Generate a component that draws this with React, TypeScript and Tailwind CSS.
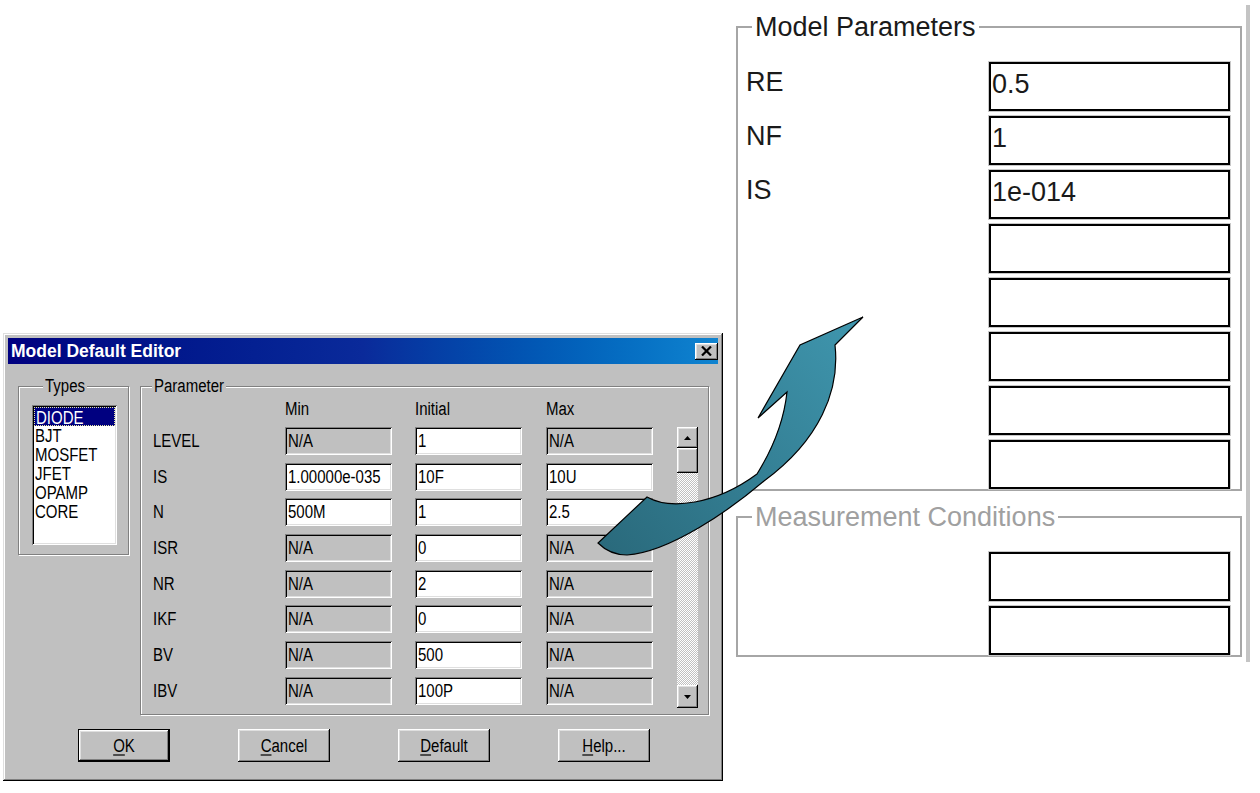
import React from 'react'

const font = "font-['Liberation_Sans',Arial,sans-serif]"
const sunken =
  'shadow-[inset_1px_1px_0_#808080,inset_-1px_-1px_0_#ffffff,inset_2px_2px_0_#000000,inset_-2px_-2px_0_#dfdfdf]'
const raised =
  'shadow-[inset_-1px_-1px_0_#000000,inset_1px_1px_0_#ffffff,inset_-2px_-2px_0_#808080,inset_2px_2px_0_#dfdfdf]'
const etched = 'border border-[#808080] shadow-[1px_1px_0_#ffffff,inset_1px_1px_0_#ffffff]'

// the screenshot is stretched a bit vertically, so dialog text is too
const T = ({ children }: { children: React.ReactNode }) => (
  <span className="inline-block scale-y-[1.2]">{children}</span>
)

type Cell = [string, boolean]

const params: [string, Cell, Cell, Cell][] = [
  ['LEVEL', ['N/A', false], ['1', true], ['N/A', false]],
  ['IS', ['1.00000e-035', true], ['10F', true], ['10U', true]],
  ['N', ['500M', true], ['1', true], ['2.5', true]],
  ['ISR', ['N/A', false], ['0', true], ['N/A', false]],
  ['NR', ['N/A', false], ['2', true], ['N/A', false]],
  ['IKF', ['N/A', false], ['0', true], ['N/A', false]],
  ['BV', ['N/A', false], ['500', true], ['N/A', false]],
  ['IBV', ['N/A', false], ['100P', true], ['N/A', false]],
]

const types = ['DIODE', 'BJT', 'MOSFET', 'JFET', 'OPAMP', 'CORE']

const modelRows = [
  ['RE', '0.5'],
  ['NF', '1'],
  ['IS', '1e-014'],
  ['', ''],
  ['', ''],
  ['', ''],
  ['', ''],
  ['', ''],
]

function Field({ cell, className = '' }: { cell: Cell; className?: string }) {
  const [v, on] = cell
  return (
    <div
      className={`h-[28px] w-[107px] flex items-center pl-[3px] ${sunken} ${
        on ? 'bg-white' : 'bg-[#c0c0c0]'
      } ${className}`}
    >
      <T>{v}</T>
    </div>
  )
}

function Btn({ u, rest, isDefault }: { u: string; rest: string; isDefault?: boolean }) {
  return (
    <div className={`w-[92px] h-[33px] ${isDefault ? 'border border-black' : ''}`}>
      <div className={`w-full h-full bg-[#c0c0c0] ${raised} flex items-center justify-center`}>
        <T>
          <span className="underline underline-offset-2">{u}</span>
          {rest}
        </T>
      </div>
    </div>
  )
}

function Arrow({ dir }: { dir: 'up' | 'down' }) {
  return (
    <svg width="7" height="4" viewBox="0 0 7 4">
      <path d={dir === 'up' ? 'M3.5 0L7 4H0z' : 'M0 0H7L3.5 4z'} fill="#000" />
    </svg>
  )
}

function Dialog() {
  return (
    <div
      className={`w-[720px] p-[5px] bg-[#c0c0c0] text-black text-[15px] leading-[18px] ${font} shadow-[inset_-1px_-1px_0_#000000,inset_1px_1px_0_#dfdfdf,inset_-2px_-2px_0_#808080,inset_2px_2px_0_#ffffff]`}
    >
      {/* Title bar */}
      <div className="h-[26px] flex items-center justify-between pl-[3px] bg-linear-to-r from-[#000080] via-[#0a2a9a] to-[#1084d0]">
        <span className="text-white font-bold text-[17.5px] leading-[20px]">Model Default Editor</span>
        <div className={`w-[23px] h-[17px] bg-[#c0c0c0] ${raised} flex items-center justify-center`}>
          <svg width="11" height="10" viewBox="0 0 11 10">
            <path d="M1 0.5L10 9.5M10 0.5L1 9.5" stroke="#000" strokeWidth="2.2" />
          </svg>
        </div>
      </div>

      {/* Body */}
      <div className="pt-[13px] pl-[10px] pb-[14px]">
        <div className="flex items-start gap-[11px]">
          {/* Types */}
          <fieldset className={`w-[111px] ${etched} pl-[13px] pb-[9px]`}>
            <legend className="ml-[11px] px-[2px] bg-[#c0c0c0]">
              <T>Types</T>
            </legend>
            <div className={`mt-[10px] w-[85px] h-[140px] bg-white ${sunken} p-[2px]`}>
              {types.map((t, i) => (
                <div
                  key={t}
                  className={`h-[19px] leading-[19px] px-[1px] ${
                    i === 0 ? 'bg-[#000080] text-white border border-dotted border-[#e8e8a0] leading-[17px]' : ''
                  }`}
                >
                  <T>{t}</T>
                </div>
              ))}
            </div>
          </fieldset>

          {/* Parameter */}
          <fieldset className={`w-[569px] ${etched} pb-[6px]`}>
            <legend className="ml-[11px] px-[2px] bg-[#c0c0c0]">
              <T>Parameter</T>
            </legend>
            <div className="flex pl-[12px]">
              <div>
                <div className="h-[32px] pt-[5px] flex">
                  <div className="w-[132px]" />
                  <div className="w-[107px]">
                    <T>Min</T>
                  </div>
                  <div className="w-[107px] ml-[23px]">
                    <T>Initial</T>
                  </div>
                  <div className="w-[107px] ml-[24px]">
                    <T>Max</T>
                  </div>
                </div>
                <div className="flex flex-col gap-[7.7px]">
                  {params.map(([name, mn, ini, mx]) => (
                    <div key={name} className="flex items-center h-[28px]">
                      <div className="w-[132px]">
                        <T>{name}</T>
                      </div>
                      <Field cell={mn} />
                      <Field cell={ini} className="ml-[23px]" />
                      <Field cell={mx} className="ml-[24px]" />
                    </div>
                  ))}
                </div>
              </div>

              {/* Scrollbar */}
              <div className="ml-[24px] mt-[32px] w-[21px] h-[281px] flex flex-col">
                <div className={`h-[21px] bg-[#c0c0c0] ${raised} flex items-center justify-center`}>
                  <Arrow dir="up" />
                </div>
                <div className={`h-[25px] bg-[#c0c0c0] ${raised}`} />
                <div className="flex-1 bg-[repeating-conic-gradient(#c0c0c0_0_25%,#ffffff_0_50%)] bg-[length:2px_2px]" />
                <div className={`h-[23px] bg-[#c0c0c0] ${raised} flex items-center justify-center`}>
                  <Arrow dir="down" />
                </div>
              </div>
            </div>
          </fieldset>
        </div>

        {/* Buttons */}
        <div className="mt-[14px] pl-[60px] flex gap-[68px]">
          <Btn u="O" rest="K" isDefault />
          <Btn u="C" rest="ancel" />
          <Btn u="D" rest="efault" />
          <Btn u="H" rest="elp..." />
        </div>
      </div>
    </div>
  )
}

function RightPanel() {
  return (
    <div
      className={`ml-[13px] mt-[5px] w-[514px] pr-[4px] pb-[5px] border-r-4 border-[#c4c4c4] ${font} text-[27px] leading-[27px]`}
    >
      <fieldset className="mt-[8px] border-2 border-[#a6a6a6]">
        <legend className="ml-[14px] px-[3px] leading-[28px] text-[#1a1a1a]">Model Parameters</legend>
        <div className="pt-[21px] flex flex-col gap-[5px]">
          {modelRows.map(([label, val], i) => (
            <div key={i} className="grid grid-cols-[251px_241px] h-[49px]">
              <div className="pl-[8px] pt-[7px] text-[#1a1a1a]">{label}</div>
              <div className="border-2 border-black shadow-[0_0_0_1px_#c8c8c8] flex items-center pl-[1px] pb-[5px] text-[#1a1a1a]">
                {val}
              </div>
            </div>
          ))}
        </div>
      </fieldset>

      <fieldset className="mt-[12px] border-2 border-[#a6a6a6]">
        <legend className="ml-[14px] px-[3px] leading-[28px] text-[#a0a0a0]">Measurement Conditions</legend>
        <div className="pt-[21px] flex flex-col gap-[5px]">
          {[0, 1].map((i) => (
            <div key={i} className="grid grid-cols-[251px_241px] h-[49px]">
              <div />
              <div className="border-2 border-black shadow-[0_0_0_1px_#c8c8c8]" />
            </div>
          ))}
        </div>
      </fieldset>
    </div>
  )
}

export default function App() {
  return (
    <div className="relative w-[1260px] h-[793px] bg-white overflow-hidden flex items-start">
      <div className="pt-[333px] pl-[3px]">
        <Dialog />
      </div>
      <RightPanel />

      {/* curved callout arrow drawn over both */}
      <svg className="absolute inset-0 pointer-events-none" width="1260" height="793" viewBox="0 0 1260 793">
        <defs>
          <linearGradient id="arrowFill" gradientUnits="userSpaceOnUse" x1="600" y1="545" x2="860" y2="320">
            <stop offset="0" stopColor="#2a6a7c" />
            <stop offset="1" stopColor="#3f96ae" />
          </linearGradient>
        </defs>
        <path
          d="M863 317 L835 345 C840 390 820 440 764 481 C730 510 670 552 627 555 C615 555 605 550 598 543 L647 497 C670 510 715 505 757 474 C772 450 784 420 787 392 L758 418 L800 345 Z"
          fill="url(#arrowFill)"
          stroke="#000"
          strokeWidth="1.2"
          strokeLinejoin="miter"
        />
      </svg>
    </div>
  )
}
